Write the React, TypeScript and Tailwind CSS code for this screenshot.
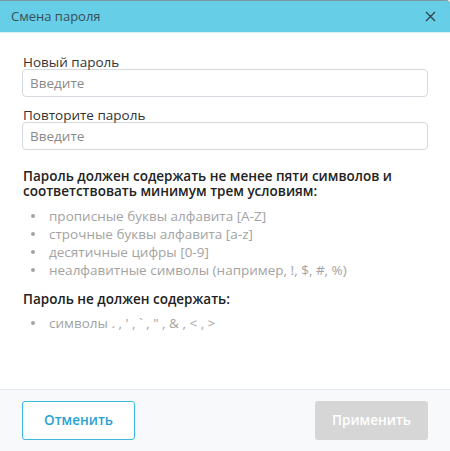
import React from "react";

export default function App() {
  const rules = [
    "прописные буквы алфавита [A-Z]",
    "строчные буквы алфавита [a-z]",
    "десятичные цифры [0-9]",
    "неалфавитные символы (например, !, $, #, %)",
  ];
  return (
    <div
      className="w-[450px] h-[451px] bg-white flex flex-col overflow-hidden"
      style={{ fontFamily: '"Open Sans", "Noto Sans", sans-serif' }}
    >
      <div className="h-[33px] shrink-0 bg-[#66cee7] border-t border-[#7d98a0] border-b border-b-[#d8f1f7] rounded-tr-[4px] flex items-center justify-between pl-[11px] pr-[14px]">
        <span className="text-[13px] text-[#3b4d55]">Смена пароля</span>
        <svg width="11" height="11" viewBox="0 0 11 11" className="text-[#33444b]">
          <path d="M1 1 L10 10 M10 1 L1 10" stroke="currentColor" strokeWidth="1.4" fill="none" />
        </svg>
      </div>

      <div className="flex-1 px-[22px] pt-[22px] text-[13.5px]">
        <div className="leading-[14px] text-[#333333] pl-[1px]">Новый пароль</div>
        <div className="h-[28px] border border-[#d5d9e0] rounded-[4px] flex items-center px-[7px] text-[#8a8a8a]">
          Введите
        </div>
        <div className="mt-[11px] leading-[14px] text-[#333333] pl-[1px]">Повторите пароль</div>
        <div className="h-[28px] border border-[#d5d9e0] rounded-[4px] flex items-center px-[7px] text-[#8a8a8a]">
          Введите
        </div>

        <div className="mt-[19px] font-semibold leading-[15px] text-[#222222] pl-[1px]">
          Пароль должен содержать не менее пяти символов и соответствовать минимум трем условиям:
        </div>
        <ul className="mt-[8px] text-[#a3a3a3] leading-[18px]">
          {rules.map((r) => (
            <li key={r} className="flex items-center">
              <span className="w-[4px] h-[4px] rounded-full bg-[#a3a3a3] ml-[9px] mr-[14px] shrink-0" />
              {r}
            </li>
          ))}
        </ul>

        <div className="mt-[12px] font-semibold leading-[16px] text-[#222222] pl-[1px]">
          Пароль не должен содержать:
        </div>
        <ul className="mt-[7px] text-[#a3a3a3] leading-[18px]">
          <li className="flex items-center">
            <span className="w-[4px] h-[4px] rounded-full bg-[#a3a3a3] ml-[9px] mr-[14px] shrink-0" />
            {"символы . , ' , ` , \" , & , < , >"}
          </li>
        </ul>
      </div>

      <div className="h-[62px] shrink-0 bg-[#f8f9fb] border-t border-[#e4e7eb] flex items-center justify-between px-[22px]">
        <button className="w-[113px] h-[39px] border border-[#3cb8df] rounded-[3px] bg-white text-[#2aa0d3] text-[13.5px] font-semibold">
          Отменить
        </button>
        <button className="w-[113px] h-[39px] rounded-[3px] bg-[#d6d6d6] text-white text-[13.5px] font-semibold">
          Применить
        </button>
      </div>
    </div>
  );
}
